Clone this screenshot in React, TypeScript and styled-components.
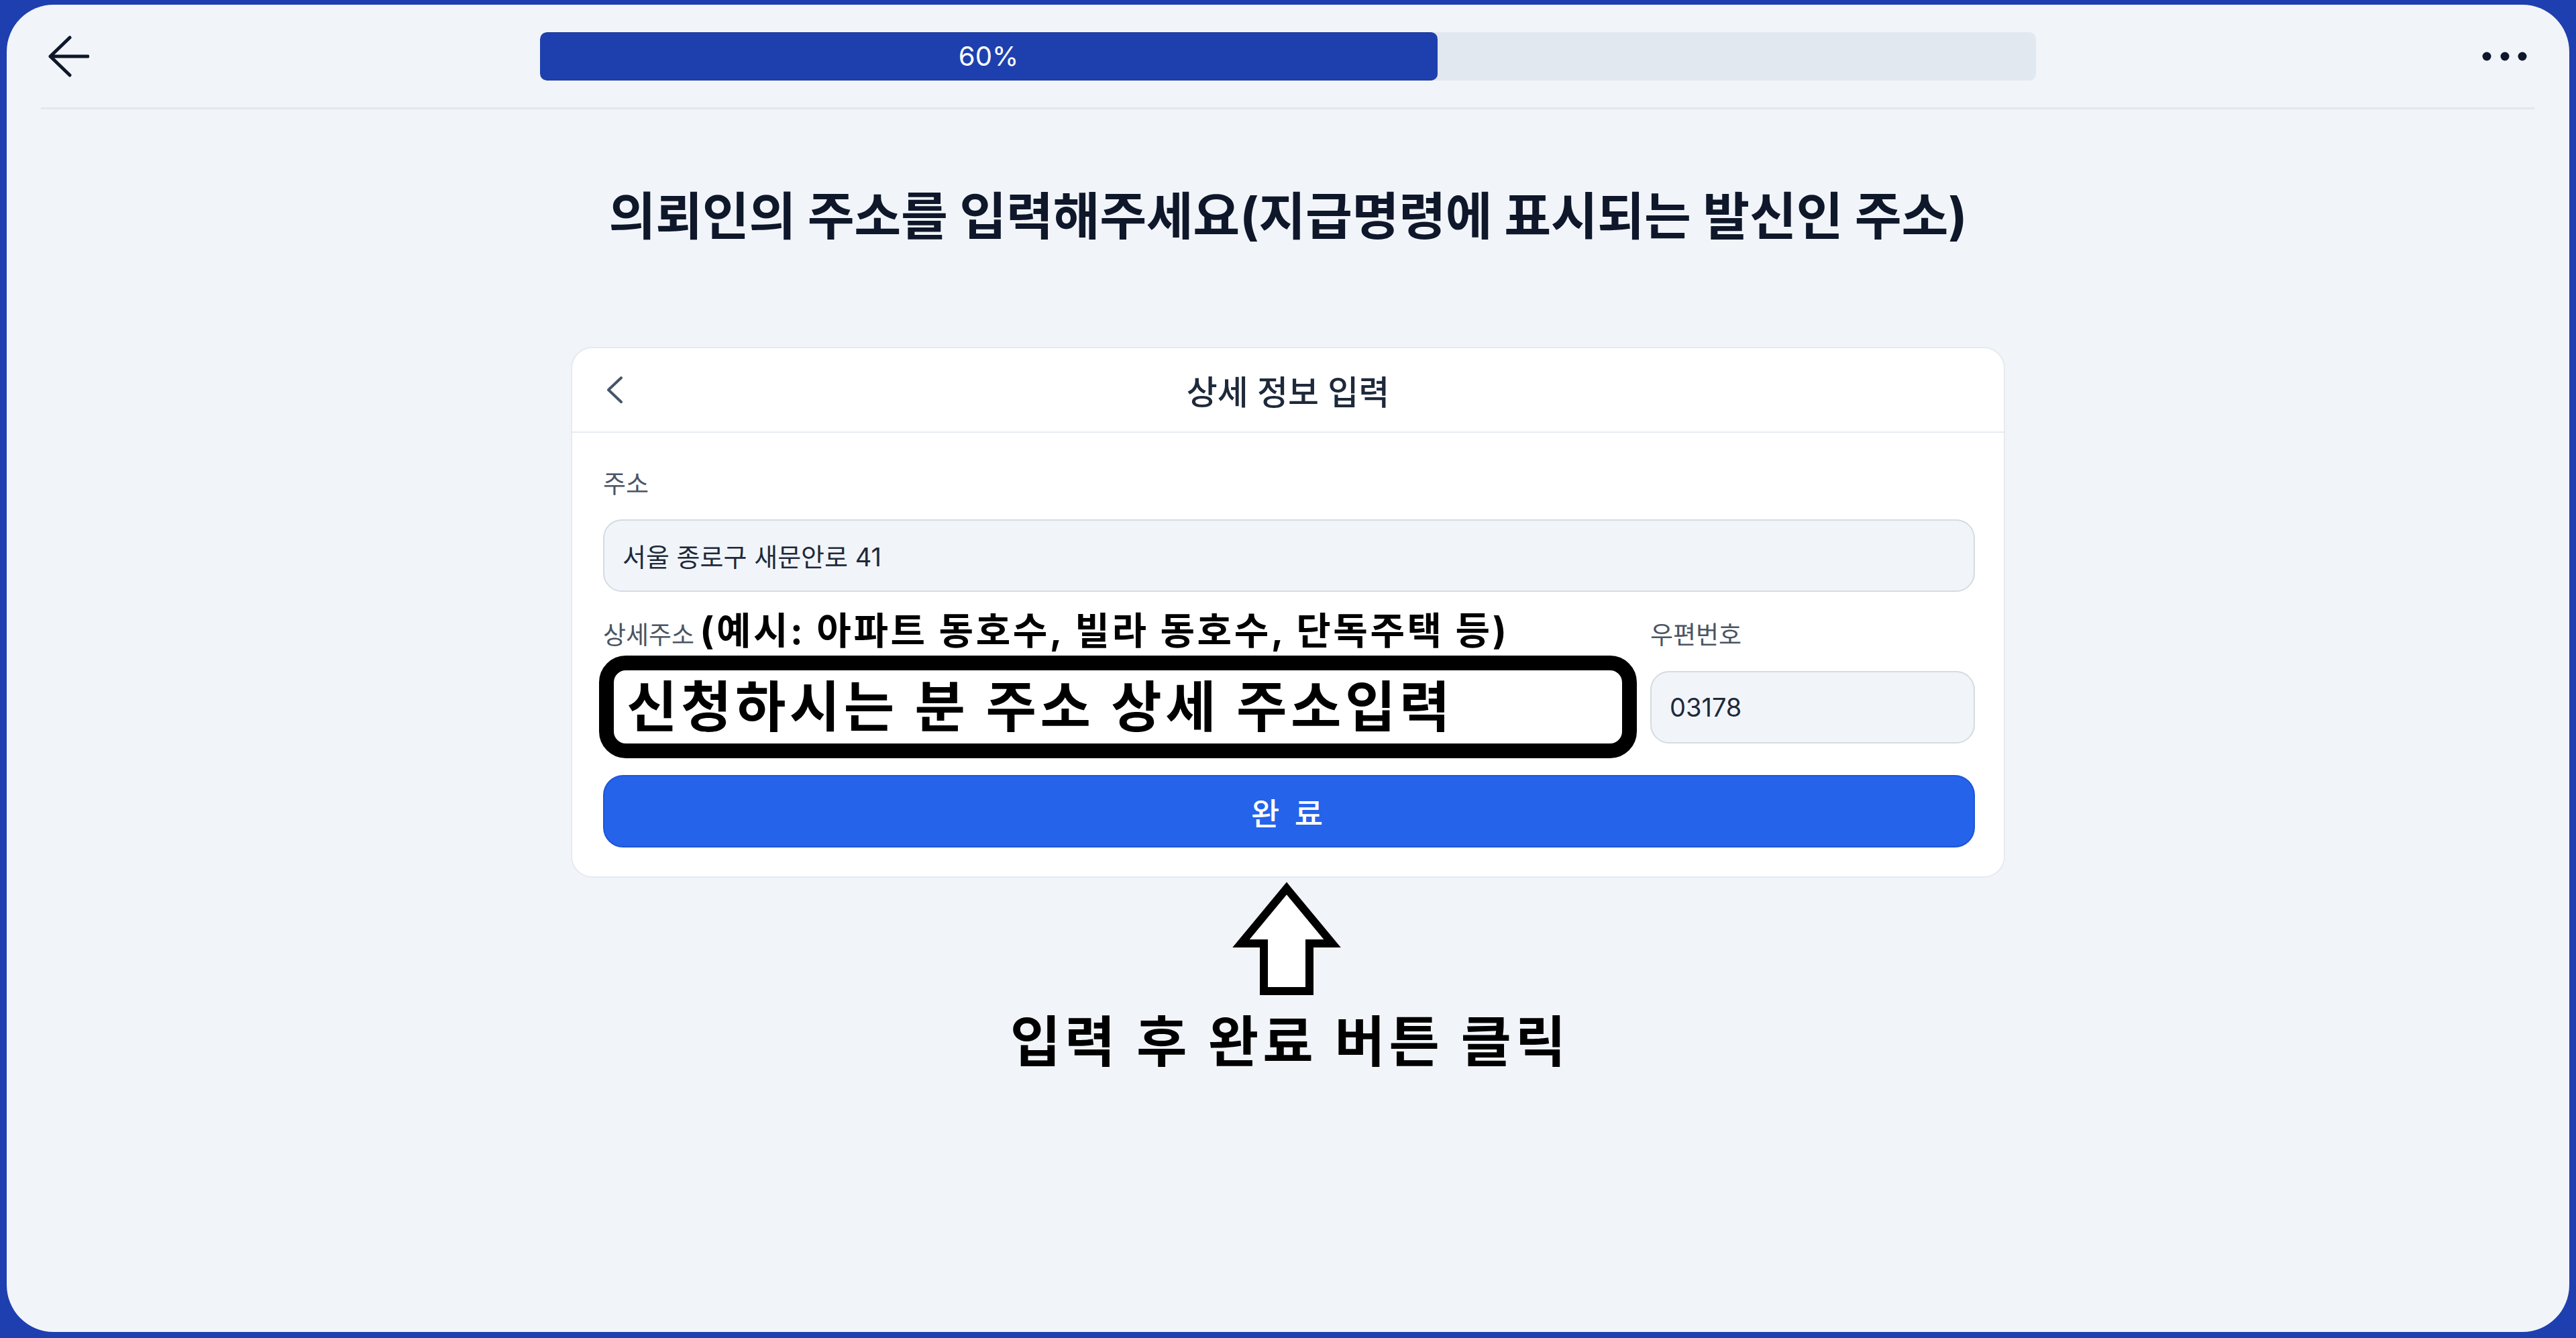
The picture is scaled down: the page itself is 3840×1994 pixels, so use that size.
import React from 'react'

import styled, { createGlobalStyle } from 'styled-components'

const GlobalStyle = createGlobalStyle`
  html, body {
    margin: 0;
    padding: 0;
    background: #1e3faf;
    font-family: Inter, "Noto Sans CJK KR", sans-serif;
  }
  * {
    box-sizing: border-box;
  }
`

const PROGRESS = 60

const App = () => {
  return (
    <Frame>
      <GlobalStyle />
      <Screen>
        <TopBar>
          <IconButton aria-label="뒤로">
            <svg width="62" height="62" viewBox="0 0 62 62" fill="none">
              <path
                d="M33 3 L4 31 L33 59 M4 31 H60"
                stroke="#0f172a"
                strokeWidth="5"
                strokeLinecap="round"
                strokeLinejoin="round"
              />
            </svg>
          </IconButton>
          <ProgressTrack>
            <ProgressFill $value={PROGRESS}>{PROGRESS}%</ProgressFill>
          </ProgressTrack>
          <MoreButton aria-label="더보기">
            <svg width="70" height="16" viewBox="0 0 70 16">
              <circle cx="7" cy="8" r="6.5" fill="#0f172a" />
              <circle cx="34" cy="8" r="6.5" fill="#0f172a" />
              <circle cx="60" cy="8" r="6.5" fill="#0f172a" />
            </svg>
          </MoreButton>
        </TopBar>

        <Title>의뢰인의 주소를 입력해주세요(지급명령에 표시되는 발신인 주소)</Title>

        <Card>
          <CardHeader>
            <BackChevron aria-label="이전">
              <svg width="30" height="44" viewBox="0 0 30 44" fill="none">
                <path
                  d="M23 4 L4 22 L23 40"
                  stroke="#475569"
                  strokeWidth="4"
                  strokeLinecap="round"
                  strokeLinejoin="round"
                />
              </svg>
            </BackChevron>
            <CardTitle>상세 정보 입력</CardTitle>
            <span />
          </CardHeader>

          <CardBody>
            <FieldLabel>주소</FieldLabel>
            <TextField readOnly value="서울 종로구 새문안로 41" />

            <DetailGrid>
              <LabelRow>
                <FieldLabel>상세주소</FieldLabel>
                <Hint>(예시: 아파트 동호수, 빌라 동호수, 단독주택 등)</Hint>
              </LabelRow>
              <FieldLabel>우편번호</FieldLabel>
              <DetailBox>신청하시는 분 주소 상세 주소입력</DetailBox>
              <PostalField readOnly value="03178" />
            </DetailGrid>

            <SubmitButton>완 료</SubmitButton>
          </CardBody>
        </Card>

        <PointerArrow width="164" height="176" viewBox="0 0 164 176">
          <polygon
            points="80,14 148,96 114,96 114,167 46,167 46,96 12,96"
            fill="#ffffff"
            stroke="#000000"
            strokeWidth="12"
            strokeLinejoin="miter"
          />
        </PointerArrow>
        <Caption>입력 후 완료 버튼 클릭</Caption>
      </Screen>
    </Frame>
  )
}

const Frame = styled.div`
  height: 100vh;
  padding: 7px 10px 9px;
  background: #1e3faf;
`

const Screen = styled.main`
  height: 100%;
  background: #f1f4f9;
  border-radius: 70px;
  display: flex;
  flex-direction: column;
  align-items: center;
  overflow: hidden;
`

const TopBar = styled.header`
  align-self: stretch;
  margin: 0 52px 0 51px;
  height: 156px;
  border-bottom: 3px solid #e3e7ee;
  display: grid;
  grid-template-columns: 1fr 2230px 1fr;
  align-items: center;
`

const IconButton = styled.button`
  justify-self: start;
  display: flex;
  padding: 0 0 0 10px;
  background: none;
  border: 0;
  cursor: pointer;
`

const MoreButton = styled(IconButton)`
  justify-self: end;
  padding: 0 8px 0 0;
`

const ProgressTrack = styled.div`
  height: 72px;
  background: #e2e8f0;
  border-radius: 10px;
  overflow: hidden;
  display: flex;
`

const ProgressFill = styled.div<{ $value: number }>`
  width: ${(p) => p.$value}%;
  height: 100%;
  background: #1e40af;
  border-top: 1px solid #1a3799;
  border-bottom: 1px solid #1a3799;
  border-radius: 10px;
  display: flex;
  align-items: center;
  justify-content: center;
  color: #ffffff;
  font-size: 40px;
  font-weight: 400;
`

const Title = styled.h1`
  margin: 110px 0 0;
  font-size: 76px;
  line-height: 1.3;
  font-weight: 700;
  letter-spacing: -0.3px;
  color: #0f172a;
`

const Card = styled.section`
  margin-top: 145px;
  width: 2138px;
  background: #ffffff;
  border: 2px solid #e6eaf0;
  border-radius: 32px;
`

const CardHeader = styled.div`
  height: 126px;
  padding: 0 50px;
  border-bottom: 2px solid #e8ecf1;
  display: grid;
  grid-template-columns: 1fr auto 1fr;
  align-items: center;
`

const BackChevron = styled.button`
  justify-self: start;
  display: flex;
  padding: 0;
  background: none;
  border: 0;
  cursor: pointer;
`

const CardTitle = styled.h2`
  margin: 0;
  font-size: 50px;
  font-weight: 500;
  letter-spacing: 0;
  color: #1e293b;
`

const CardBody = styled.div`
  padding: 53px 43px 43px 46px;
  display: flex;
  flex-direction: column;
`

const FieldLabel = styled.label`
  display: block;
  font-size: 37px;
  line-height: 1.3;
  color: #4b5563;
  letter-spacing: 0;
  white-space: nowrap;
`

const TextField = styled.input`
  margin-top: 28px;
  width: 100%;
  height: 108px;
  padding: 0 27px;
  background: #f1f5f9;
  border: 2px solid #d5dbe3;
  border-radius: 28px;
  font-family: Inter, "Noto Sans CJK KR", sans-serif;
  font-size: 38px;
  letter-spacing: 0;
  color: #1e293b;
  outline: none;
`

const DetailGrid = styled.div`
  margin-top: 25px;
  display: grid;
  grid-template-columns: 1fr 484px;
  column-gap: 30px;
  row-gap: 26px;
  align-items: baseline;
`

const LabelRow = styled.div`
  display: flex;
  align-items: baseline;
  gap: 8px;
`

const Hint = styled.span`
  font-size: 56px;
  line-height: 1.2;
  font-weight: 700;
  letter-spacing: 3.6px;
  color: #000000;
  white-space: nowrap;
`

const DetailBox = styled.div`
  align-self: start;
  margin: -23px -10px -22px -6px;
  height: 153px;
  padding-left: 19px;
  border: 22px solid #000000;
  border-radius: 40px;
  background: #ffffff;
  display: flex;
  align-items: center;
  font-size: 82px;
  line-height: 1;
  font-weight: 700;
  letter-spacing: 5.5px;
  color: #000000;
  white-space: nowrap;
`

const PostalField = styled(TextField)`
  align-self: start;
  margin-top: 0;
  font-size: 38px;
`

const SubmitButton = styled.button`
  margin-top: 47px;
  width: 100%;
  height: 108px;
  padding-left: 5px;
  background: #2563eb;
  border: 2px solid #1f55d6;
  border-radius: 30px;
  font-family: Inter, "Noto Sans CJK KR", sans-serif;
  font-size: 46px;
  font-weight: 500;
  letter-spacing: 5px;
  color: #ffffff;
  cursor: pointer;
`

const PointerArrow = styled.svg`
  display: block;
  margin-top: 2px;
  overflow: visible;
`

const Caption = styled.p`
  margin: 18px 0 0;
  font-size: 82px;
  line-height: 1.2;
  font-weight: 700;
  letter-spacing: 6px;
  padding-left: 6px;
  color: #000000;
`

export default App
